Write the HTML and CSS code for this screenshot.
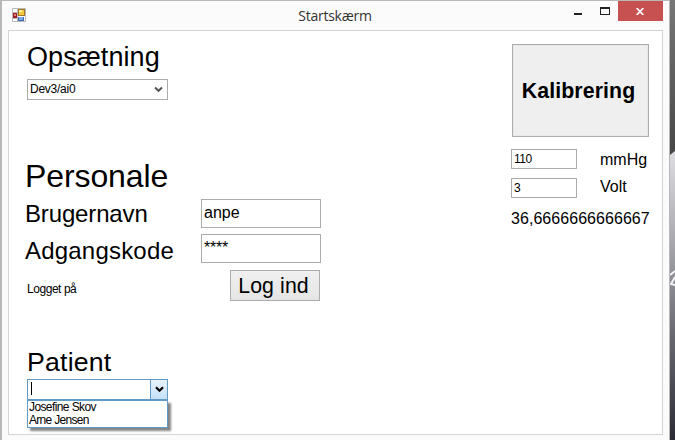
FILE: index.html
```
<!DOCTYPE html>
<html lang="da">
<head>
<meta charset="utf-8">
<title>Startskærm</title>
<link rel="stylesheet" href="styles.css">
</head>
<body>
<div class="desktop">
  <div class="window">
    <header class="titlebar">
      <svg class="app-icon" width="14" height="14" viewBox="0 0 14 14">
        <path fill="#fff" stroke="#b9b9b9" d="M.5.5h13v13H.5zM5.5.5v13M.5 4.500h5M.5 10.500h5M10.500 9v4.500"/>
        <path fill="#9e2024" d="M1 5h4v5H1z"/><path fill="#dc7f78" d="M2 6h2v2H2z"/>
        <path fill="#a57722" d="M6 1h7v7H6z"/><path fill="#f5ca3e" d="M7 2h5v5H7z"/><path fill="#fff0a0" d="M7 2h3v2H7z"/>
        <path fill="#3e6cb6" d="M6 9h6v4H6z"/><path fill="#7ca9e8" d="M7 9h4v3H7z"/>
      </svg>
      <h1 class="title">Startskærm</h1>
      <div class="controls">
        <svg class="sys" width="50" height="20" viewBox="0 0 50 20">
          <path fill="#222" d="M2 12h8v2H2z"/>
          <path fill="#222" fill-rule="evenodd" d="M28 6h10v8H28zM29 8v5h8V8z"/>
        </svg>
        <div class="close"><svg width="8" height="7" viewBox="0 0 8 7"><path stroke="#fff" stroke-width="1.700" d="M.6 0l6.800 7M7.400 0L.6 7"/></svg></div>
      </div>
    </header>
    <main class="client">
      <div class="left">
        <h2 class="h-setup">Opsætning</h2>
        <div class="combo">
          <span>Dev3/ai0</span>
          <svg width="9" height="7" viewBox="0 0 9 7"><path fill="none" stroke="#555" stroke-width="2" d="M1 1.500l3.500 3.300L8 1.500"/></svg>
        </div>
        <h2 class="h-staff">Personale</h2>
        <div class="field"><label>Brugernavn</label><div class="box">anpe</div></div>
        <div class="field"><label class="wide">Adgangskode</label><div class="box stars">****</div></div>
        <div class="login-row"><span>Logget på</span><button class="login">Log ind</button></div>
        <h2 class="h-patient">Patient</h2>
        <div class="combo open">
          <i class="caret"></i>
          <div class="drop"><svg width="9" height="7" viewBox="0 0 9 7"><path fill="none" stroke="#000" stroke-width="2.200" d="M1 1.200l3.500 3.500L8 1.200"/></svg></div>
          <ul class="list"><li>Josefine Skov</li><li class="arne">Arne Jensen</li></ul>
        </div>
      </div>
      <div class="right">
        <button class="calibrate">Kalibrering</button>
        <div class="measure first"><div class="small-box">110</div><span>mmHg</span></div>
        <div class="measure"><div class="small-box">3</div><span class="volt">Volt</span></div>
        <div class="result">36,6666666666667</div>
      </div>
    </main>
  </div>
  <svg class="wallpaper" width="5" height="440" viewBox="0 0 5 440">
    <defs>
      <linearGradient id="dark" x1="0" y1="0" x2="0" y2="1"><stop offset="0" stop-color="#777"/><stop offset="1" stop-color="#464646"/></linearGradient>
      <linearGradient id="light" x1="0" y1="0" x2="0" y2="1"><stop offset="0" stop-color="#dedee2"/><stop offset=".3" stop-color="#aaaab0"/><stop offset=".65" stop-color="#66666f"/><stop offset="1" stop-color="#2b2b36"/></linearGradient>
    </defs>
    <path fill="url(#dark)" d="M0 0h5v155H0z"/>
    <path fill="url(#light)" d="M0 155l5-4v289H0z"/>
    <path fill="none" stroke="#f2f2f4" stroke-width="2" d="M0 275l5-4M5 277l-4 7 4 1"/>
  </svg>
</div>
</body>
</html>
```
FILE: styles.css
```
* { box-sizing: border-box; }
body { margin: 0; font-family: "Liberation Sans", Arial, sans-serif; color: #000; overflow: hidden; }
h1, h2, ul { margin: 0; padding: 0; font-weight: normal; list-style: none; }
svg { display: block; }
button { font-family: inherit; color: #000; border: 1px solid #acacac; border-radius: 0; padding: 0; white-space: nowrap; }
.desktop { display: flex; width: 675px; height: 440px; background: #bdbdbd; }
.window { width: 670px; height: 440px; background: #fbfbfb; border: solid #b8b8b8; border-width: 1px 1px 0 2px; padding: 0 6px 0 6px; }
.wallpaper { flex: none; }
.titlebar { height: 29px; display: flex; justify-content: space-between; }
.app-icon { margin: 7px 0 0 4px; }
.title { font: 14px/20px "Open Sans", "Noto Sans", sans-serif; color: #333; letter-spacing: -.25px; margin: 5px 0 0 72px; white-space: nowrap; }
.controls { display: flex; height: 20px; }
.close { width: 45px; height: 20px; margin-left: -4px; background: #c75050; display: flex; justify-content: center; align-items: center; }
.client { width: 655px; height: 405px; background: #fff; border: 1px solid #d4d4d4; display: flex; justify-content: space-between; }
.left { width: 320px; padding: 12px 0 0 18px; white-space: nowrap; }
.h-setup { font-size: 27px; line-height: 28px; height: 36px; letter-spacing: .08px; }
.combo { position: relative; width: 141px; height: 21px; border: 1px solid #ababab; background: #fff; display: flex; justify-content: space-between; align-items: center; padding: 0 4px 1px 2px; font-size: 12px; letter-spacing: -.25px; }
.h-staff { font-size: 32px; line-height: 36px; margin: 58px 0 5px -2px; letter-spacing: -.1px; }
.field { display: flex; height: 35px; }
.field label { width: 176px; margin-left: -2px; font-size: 24px; line-height: 30px; letter-spacing: -.15px; }
.field .wide { letter-spacing: .2px; line-height: 34px; }
.box { width: 120px; height: 29px; border: 1px solid #ababab; font-size: 16px; line-height: 26px; padding-left: 2px; }
.stars { line-height: 25px; letter-spacing: -.2px; }
.login-row { display: flex; width: 293px; height: 31px; margin-top: 1px; justify-content: space-between; align-items: center; font-size: 12px; letter-spacing: -.45px; }
.login-row span { padding-top: 7px; }
.login { width: 90px; height: 31px; font-size: 21.300px; letter-spacing: .1px; padding: 1px 3px 0 0; background: linear-gradient(#f0f0f0, #e5e5e5); }
.h-patient { font-size: 26.700px; line-height: 30px; margin: 46px 0 2px; letter-spacing: .2px; }
.open { border-color: #629ac6; padding: 0 0 0 3px; align-items: stretch; }
.caret { width: 1px; height: 13px; margin-top: 2px; background: #000; }
.drop { width: 17px; border-left: 1px solid #629ac6; background: linear-gradient(#e8f3fc, #c5e0f8); display: flex; align-items: center; justify-content: center; }
.list { position: absolute; left: -1px; top: 20px; width: 141px; height: 28px; background: #fff; border: 1px solid #629ac6; padding-left: 1px; font-size: 12px; line-height: 13px; letter-spacing: -.6px; box-shadow: 3px 3px 2px rgba(0,0,0,.48); }
.arne { letter-spacing: -.7px; }
.right { width: 152px; padding: 13px 0 0 1px; white-space: nowrap; }
.calibrate { display: block; width: 137px; height: 93px; margin-left: 1px; padding: 2px 4px 0 0; background: #efefef; font-size: 21.300px; font-weight: bold; letter-spacing: .1px; box-shadow: inset 0 0 0 1px #e8e8e8; }
.measure { display: flex; height: 29px; }
.first { margin-top: 12px; }
.small-box { width: 66px; height: 20px; border: 1px solid #ababab; font-size: 12px; letter-spacing: -.5px; line-height: 19px; padding-left: 2px; margin-right: 23px; }
.measure span { font-size: 16px; line-height: 21px; }
.measure .volt { line-height: 17px; }
.result { font-size: 16px; line-height: 23px; letter-spacing: .05px; }
```
